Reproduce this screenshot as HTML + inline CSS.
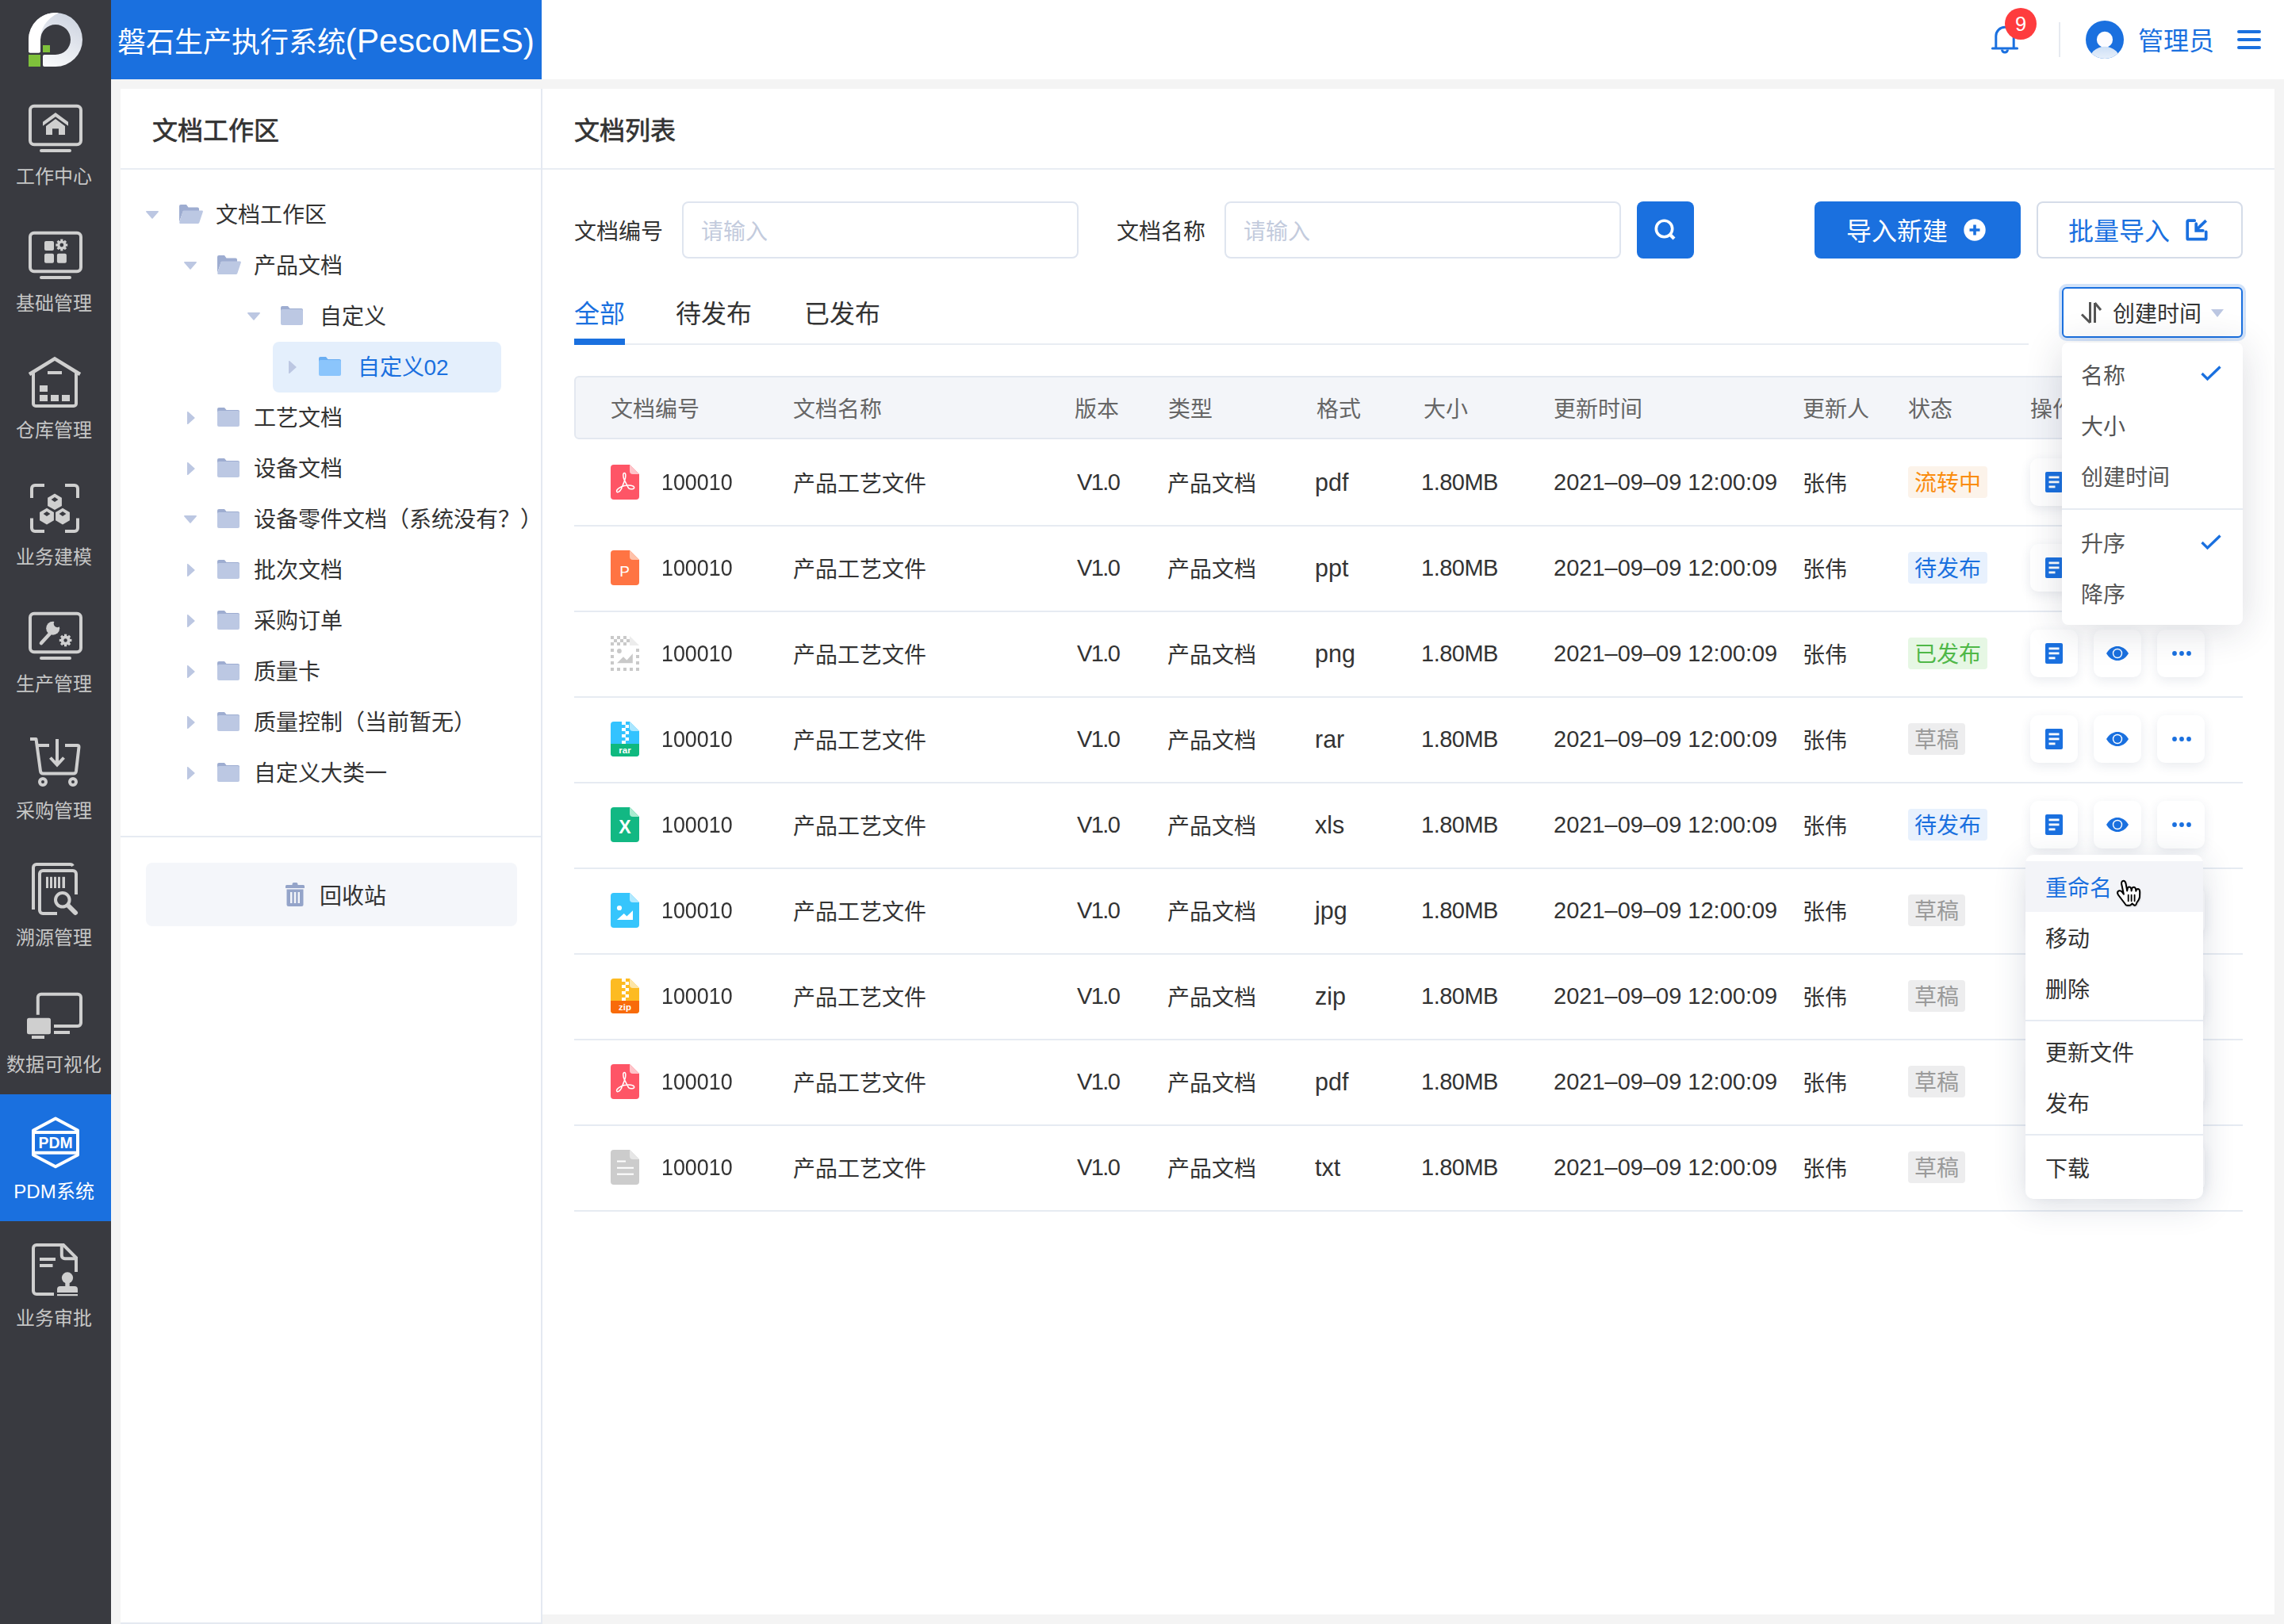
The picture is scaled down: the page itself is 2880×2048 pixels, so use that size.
<!DOCTYPE html>
<html lang="zh-CN"><head><meta charset="utf-8"><title>PescoMES</title>
<style>
*{margin:0;padding:0;box-sizing:border-box}
html,body{width:2880px;height:2048px;overflow:hidden}
body{position:relative;background:#f4f4f4;font-family:"Liberation Sans",sans-serif;color:#333}
.a{position:absolute}
.t{position:absolute;white-space:nowrap;line-height:40px;font-size:28px}
svg{position:absolute;overflow:visible}
</style></head><body>

<div class="a" style="left:0;top:0;width:140px;height:2048px;background:#393a40"></div>
<svg style="left:0;top:0" width="140" height="100" viewBox="0 0 140 100">
<defs><linearGradient id="lg" x1="0.85" y1="0.1" x2="0.35" y2="1"><stop offset="0" stop-color="#cfd5e1"/><stop offset="1" stop-color="#fafbfc"/></linearGradient></defs>
<path d="M36,64.5 a2,2 0 0 0 2,2 H49 a2,2 0 0 0 2,-2 V50 A19,19 0 1 1 70,69 H56 a2,2 0 0 0 -2,2 V82 a2,2 0 0 0 2,2 H70 A34,34 0 1 0 36,50 Z" fill="url(#lg)"/>
<path d="M36,64.5 a2,2 0 0 0 2,2 H49 a2,2 0 0 0 2,-2 V50 C51,36 58,24 74,16.2 A34,34 0 0 0 36,50 Z" fill="#ffffff"/>
<rect x="36" y="69" width="15" height="15" fill="#7fc13b"/>
<rect x="54" y="57" width="9" height="9" fill="#7fc13b"/>
</svg>
<svg style="left:0;top:100px" width="140" height="160" viewBox="0 0 140 160"><rect x="38" y="33.7" width="64" height="48.5" rx="5" fill="none" stroke="#cfcfcf" stroke-width="4"/><rect x="50" y="88" width="40" height="4" rx="2" fill="#cfcfcf"/><path d="M54,53.7 L70,41.9 L86,53.7 V58.8 L70,47.3 L54,58.8Z" fill="#cfcfcf"/><path d="M58,59 L70,50 L82,59 V70 H74 V62.3 H66 V70 H58Z" fill="#cfcfcf"/></svg>
<div class="t" style="left:-2px;width:140px;text-align:center;top:202.9px;font-size:24px;color:#c6c6c6">工作中心</div>
<svg style="left:0;top:260px" width="140" height="160" viewBox="0 0 140 160"><rect x="38" y="33.7" width="64" height="48.5" rx="5" fill="none" stroke="#cfcfcf" stroke-width="4"/><rect x="50" y="88" width="40" height="4" rx="2" fill="#cfcfcf"/><rect x="56" y="44" width="12" height="12" rx="2" fill="#cfcfcf"/><rect x="56" y="59.8" width="12" height="12" rx="2" fill="#cfcfcf"/><rect x="71.9" y="59.8" width="12" height="12" rx="2" fill="#cfcfcf"/><circle cx="77.8" cy="49" r="5.6000000000000005" fill="#cfcfcf"/><rect x="76.2" y="41.599999999999994" width="3.2" height="3" fill="#cfcfcf" transform="rotate(0 77.8 49)"/><rect x="76.2" y="41.599999999999994" width="3.2" height="3" fill="#cfcfcf" transform="rotate(45 77.8 49)"/><rect x="76.2" y="41.599999999999994" width="3.2" height="3" fill="#cfcfcf" transform="rotate(90 77.8 49)"/><rect x="76.2" y="41.599999999999994" width="3.2" height="3" fill="#cfcfcf" transform="rotate(135 77.8 49)"/><rect x="76.2" y="41.599999999999994" width="3.2" height="3" fill="#cfcfcf" transform="rotate(180 77.8 49)"/><rect x="76.2" y="41.599999999999994" width="3.2" height="3" fill="#cfcfcf" transform="rotate(225 77.8 49)"/><rect x="76.2" y="41.599999999999994" width="3.2" height="3" fill="#cfcfcf" transform="rotate(270 77.8 49)"/><rect x="76.2" y="41.599999999999994" width="3.2" height="3" fill="#cfcfcf" transform="rotate(315 77.8 49)"/><circle cx="77.8" cy="49" r="2.4" fill="#393a40"/></svg>
<div class="t" style="left:-2px;width:140px;text-align:center;top:362.9px;font-size:24px;color:#c6c6c6">基础管理</div>
<svg style="left:0;top:420px" width="140" height="160" viewBox="0 0 140 160"><path d="M37,52 L69,32.3 L101,52" fill="none" stroke="#cfcfcf" stroke-width="4.5"/><path d="M42,50 V89 a3,3 0 0 0 3,3 H93 a3,3 0 0 0 3,-3 V50" fill="none" stroke="#cfcfcf" stroke-width="4"/><rect x="60" y="48" width="18" height="4" fill="#cfcfcf"/><rect x="50" y="66" width="10" height="8" fill="#cfcfcf"/><rect x="50" y="78" width="10" height="8" fill="#cfcfcf"/><rect x="64" y="78" width="10" height="8" fill="#cfcfcf"/><rect x="78" y="78" width="10" height="8" fill="#cfcfcf"/></svg>
<div class="t" style="left:-2px;width:140px;text-align:center;top:522.9px;font-size:24px;color:#c6c6c6">仓库管理</div>
<svg style="left:0;top:580px" width="140" height="160" viewBox="0 0 140 160"><path d="M40,48 V36 a4,4 0 0 1 4,-4 H56" fill="none" stroke="#cfcfcf" stroke-width="4"/><path d="M82,32 H94 a4,4 0 0 1 4,4 V48" fill="none" stroke="#cfcfcf" stroke-width="4"/><path d="M40,73.5 V86 a4,4 0 0 0 4,4 H56" fill="none" stroke="#cfcfcf" stroke-width="4"/><path d="M98,73.5 V86 a4,4 0 0 1 -4,4 H82" fill="none" stroke="#cfcfcf" stroke-width="4"/><polygon points="69.00,42.50 77.92,47.65 77.92,57.95 69.00,63.10 60.08,57.95 60.08,47.65" fill="#cfcfcf"/><polygon points="59.00,60.80 67.92,65.95 67.92,76.25 59.00,81.40 50.08,76.25 50.08,65.95" fill="#cfcfcf"/><polygon points="79.00,60.80 87.92,65.95 87.92,76.25 79.00,81.40 70.08,76.25 70.08,65.95" fill="#cfcfcf"/><polygon points="69,47 73.4,50 69,53 64.6,50" fill="#393a40"/><polygon points="59,65 63.4,68 59,71 54.6,68" fill="#393a40"/><polygon points="79,65 83.4,68 79,71 74.6,68" fill="#393a40"/></svg>
<div class="t" style="left:-2px;width:140px;text-align:center;top:682.9px;font-size:24px;color:#c6c6c6">业务建模</div>
<svg style="left:0;top:740px" width="140" height="160" viewBox="0 0 140 160"><rect x="38" y="33.7" width="64" height="48.5" rx="5" fill="none" stroke="#cfcfcf" stroke-width="4"/><rect x="50" y="88" width="40" height="4" rx="2" fill="#cfcfcf"/><line x1="52" y1="71" x2="63" y2="59" stroke="#cfcfcf" stroke-width="4.6" stroke-linecap="round"/><circle cx="66.7" cy="52.2" r="8.5" fill="#cfcfcf"/><circle cx="72.3" cy="46.6" r="4.6" fill="#393a40"/><circle cx="82.6" cy="67.5" r="6.0" fill="#cfcfcf"/><rect x="81.0" y="59.699999999999996" width="3.2" height="3" fill="#cfcfcf" transform="rotate(0 82.6 67.5)"/><rect x="81.0" y="59.699999999999996" width="3.2" height="3" fill="#cfcfcf" transform="rotate(45 82.6 67.5)"/><rect x="81.0" y="59.699999999999996" width="3.2" height="3" fill="#cfcfcf" transform="rotate(90 82.6 67.5)"/><rect x="81.0" y="59.699999999999996" width="3.2" height="3" fill="#cfcfcf" transform="rotate(135 82.6 67.5)"/><rect x="81.0" y="59.699999999999996" width="3.2" height="3" fill="#cfcfcf" transform="rotate(180 82.6 67.5)"/><rect x="81.0" y="59.699999999999996" width="3.2" height="3" fill="#cfcfcf" transform="rotate(225 82.6 67.5)"/><rect x="81.0" y="59.699999999999996" width="3.2" height="3" fill="#cfcfcf" transform="rotate(270 82.6 67.5)"/><rect x="81.0" y="59.699999999999996" width="3.2" height="3" fill="#cfcfcf" transform="rotate(315 82.6 67.5)"/><circle cx="82.6" cy="67.5" r="2.2" fill="#393a40"/></svg>
<div class="t" style="left:-2px;width:140px;text-align:center;top:842.9px;font-size:24px;color:#c6c6c6">生产管理</div>
<svg style="left:0;top:900px" width="140" height="160" viewBox="0 0 140 160"><path d="M38,32 H45.5 L51,72.5 a3.5,3.5 0 0 0 3.5,3 H92.5 a3.5,3.5 0 0 0 3.5,-3 L99.5,42 a2,2 0 0 0 -2,-2 H82" fill="none" stroke="#cfcfcf" stroke-width="4" stroke-linejoin="round"/><path d="M46,40 H62" stroke="#cfcfcf" stroke-width="4"/><path d="M72,32 V64" stroke="#cfcfcf" stroke-width="4"/><path d="M63.5,55.5 L72,64.5 L80.5,55.5" fill="none" stroke="#cfcfcf" stroke-width="4"/><circle cx="54" cy="86" r="4" fill="none" stroke="#cfcfcf" stroke-width="4"/><circle cx="92" cy="86" r="4" fill="none" stroke="#cfcfcf" stroke-width="4"/></svg>
<div class="t" style="left:-2px;width:140px;text-align:center;top:1002.9px;font-size:24px;color:#c6c6c6">采购管理</div>
<svg style="left:0;top:1060px" width="140" height="160" viewBox="0 0 140 160"><path d="M42,87 V34 a4,4 0 0 1 4,-4 H88 a4,4 0 0 1 4,2" fill="none" stroke="#cfcfcf" stroke-width="4"/><path d="M72,92 H54 a4,4 0 0 1 -4,-4 V42 a4,4 0 0 1 4,-4 H92 a4,4 0 0 1 4,4 V68" fill="none" stroke="#cfcfcf" stroke-width="4"/><rect x="58" y="45.8" width="3" height="14.2" fill="#cfcfcf"/><rect x="63" y="45.8" width="3" height="14.2" fill="#cfcfcf"/><rect x="68" y="45.8" width="3" height="14.2" fill="#cfcfcf"/><rect x="73" y="45.8" width="3" height="14.2" fill="#cfcfcf"/><rect x="78.5" y="45.8" width="3.5" height="14.2" fill="#cfcfcf"/><circle cx="78.8" cy="74.8" r="8.8" fill="none" stroke="#cfcfcf" stroke-width="4"/><line x1="86" y1="82" x2="95" y2="91" stroke="#cfcfcf" stroke-width="6" stroke-linecap="round"/></svg>
<div class="t" style="left:-2px;width:140px;text-align:center;top:1162.9px;font-size:24px;color:#c6c6c6">溯源管理</div>
<svg style="left:0;top:1220px" width="140" height="160" viewBox="0 0 140 160"><path d="M47.8,59.8 V37.7 a4,4 0 0 1 4,-4 H98 a4,4 0 0 1 4,4 V70 a4,4 0 0 1 -4,4 H68" fill="none" stroke="#cfcfcf" stroke-width="4"/><rect x="68" y="80" width="20" height="4" fill="#cfcfcf"/><rect x="34" y="63.8" width="30" height="20.4" rx="2.5" fill="#cfcfcf"/><rect x="40" y="86" width="16" height="4" fill="#cfcfcf"/></svg>
<div class="t" style="left:-2px;width:140px;text-align:center;top:1322.9px;font-size:24px;color:#c6c6c6">数据可视化</div>
<div class="a" style="left:0;top:1380px;width:140px;height:160px;background:#1a70df"></div>
<svg style="left:0;top:1380px" width="140" height="160" viewBox="0 0 140 160"><path d="M70,30.6 L98,45.6 V76.5 L70,91.2 L42,76.5 V45.6 Z" fill="none" stroke="#fff" stroke-width="4" stroke-linejoin="round"/><path d="M42,48 H98 M42,73.7 H98" stroke="#fff" stroke-width="4"/><text x="70" y="68.2" font-size="19.4" font-weight="bold" text-anchor="middle" fill="#fff" font-family="Liberation Sans">PDM</text></svg>
<div class="t" style="left:-2px;width:140px;text-align:center;top:1482.9px;font-size:24px;color:#ffffff">PDM系统</div>
<svg style="left:0;top:1540px" width="140" height="160" viewBox="0 0 140 160"><path d="M68,92 H46 a4,4 0 0 1 -4,-4 V34 a4,4 0 0 1 4,-4 H80 L96,46 V64" fill="none" stroke="#cfcfcf" stroke-width="4"/><path d="M77.8,31 V43.3 a4,4 0 0 0 4,4 H95" fill="none" stroke="#cfcfcf" stroke-width="4"/><rect x="50" y="46" width="20" height="4" fill="#cfcfcf"/><rect x="50" y="54" width="16.5" height="4" fill="#cfcfcf"/><circle cx="85" cy="71.4" r="7.1" fill="#cfcfcf"/><rect x="82.3" y="74" width="5.4" height="9" fill="#cfcfcf"/><path d="M72,90 V86 a4,4 0 0 1 4,-4 H94 a4,4 0 0 1 4,4 V90 Z" fill="#cfcfcf"/><rect x="72" y="92" width="26" height="2.2" fill="#cfcfcf"/></svg>
<div class="t" style="left:-2px;width:140px;text-align:center;top:1642.9px;font-size:24px;color:#c6c6c6">业务审批</div>
<div class="a" style="left:140px;top:0;width:2740px;height:100px;background:#fff"></div>
<div class="a" style="left:140px;top:0;width:543px;height:100px;background:#1a70df"></div>
<div class="t" style="left:147.5px;top:22px;font-size:36px;line-height:60px;color:#fff">磐石生产执行系统<span style="font-size:42.5px">(PescoMES)</span></div>
<svg style="left:2500px;top:20px" width="60" height="60" viewBox="0 0 60 60">
<path d="M16.8,41 V25.5 a11.2,11.2 0 0 1 22.4,0 V41" fill="none" stroke="#1a70df" stroke-width="3"/>
<line x1="12.5" y1="41" x2="43.5" y2="41" stroke="#1a70df" stroke-width="3.2" stroke-linecap="round"/>
<path d="M24.5,42.6 a3.5,3.5 0 0 0 7,0" fill="none" stroke="#1a70df" stroke-width="3"/>
</svg>
<div class="a" style="left:2528px;top:10px;width:40px;height:40px;border-radius:20px;background:#fe3c3e;color:#fff;font-size:25.5px;line-height:40px;text-align:center">9</div>
<div class="a" style="left:2596px;top:28px;width:2px;height:44px;background:#e6eaf0"></div>
<svg style="left:2630px;top:26px" width="48" height="48" viewBox="0 0 48 48">
<defs><clipPath id="avc"><circle cx="24" cy="24" r="24"/></clipPath>
<linearGradient id="avg" x1="0" y1="0" x2="0" y2="1"><stop offset="0" stop-color="#cddff6"/><stop offset="0.6" stop-color="#f4f8fd"/><stop offset="1" stop-color="#ffffff"/></linearGradient></defs>
<circle cx="24" cy="24" r="24" fill="#1a70df"/>
<circle cx="24" cy="23.9" r="10.1" fill="#fdfcff"/>
<ellipse cx="24" cy="52" rx="20" ry="19.3" fill="url(#avg)" clip-path="url(#avc)"/>
</svg>
<div class="t" style="left:2695.5px;top:32.0px;font-size:32px;color:#1a70df;">管理员</div>
<div class="a" style="left:2821px;top:38px;width:30px;height:4px;border-radius:2px;background:#1a70df"></div>
<div class="a" style="left:2821px;top:48px;width:30px;height:4px;border-radius:2px;background:#1a70df"></div>
<div class="a" style="left:2821px;top:58px;width:30px;height:4px;border-radius:2px;background:#1a70df"></div>
<div class="a" style="left:152px;top:112px;width:532px;height:1936px;background:#fff;border-right:2px solid #e4e9f1;border-bottom:2px solid #e4e9f1"></div>
<div class="t" style="left:192.0px;top:144.5px;font-size:32px;color:#333333;-webkit-text-stroke:0.7px #333">文档工作区</div>
<div class="a" style="left:152px;top:212px;width:530px;height:2px;background:#e9edf3"></div>
<svg style="left:184px;top:265.5px" width="16" height="10" viewBox="0 0 16 10"><path d="M0.8,0 H15.2 a0.8,0.8 0 0 1 0.6,1.3 L8.6,9.4 a0.8,0.8 0 0 1 -1.2,0 L0.2,1.3 A0.8,0.8 0 0 1 0.8,0Z" fill="#bcc7e2"/></svg>
<svg style="left:226px;top:257.5px" width="30" height="24" viewBox="0 0 30 24"><path d="M0,2 a2,2 0 0 1 2,-2 H9 L11.5,3.5 H23 a2,2 0 0 1 2,2 V8 H5 L0,22Z" fill="#9eadd1"/><path d="M4.5,8.5 a1.5,1.5 0 0 1 1.4,-1 H28.5 a1.3,1.3 0 0 1 1.3,1.7 L25.3,22.8 a1.5,1.5 0 0 1 -1.4,1.1 H1.6 a1.3,1.3 0 0 1 -1.3,-1.7Z" fill="#bcc8e3"/></svg>
<div class="t" style="left:272.0px;top:252.2px;font-size:28px;color:#333333;">文档工作区</div>
<svg style="left:232px;top:329.5px" width="16" height="10" viewBox="0 0 16 10"><path d="M0.8,0 H15.2 a0.8,0.8 0 0 1 0.6,1.3 L8.6,9.4 a0.8,0.8 0 0 1 -1.2,0 L0.2,1.3 A0.8,0.8 0 0 1 0.8,0Z" fill="#bcc7e2"/></svg>
<svg style="left:274px;top:321.5px" width="30" height="24" viewBox="0 0 30 24"><path d="M0,2 a2,2 0 0 1 2,-2 H9 L11.5,3.5 H23 a2,2 0 0 1 2,2 V8 H5 L0,22Z" fill="#9eadd1"/><path d="M4.5,8.5 a1.5,1.5 0 0 1 1.4,-1 H28.5 a1.3,1.3 0 0 1 1.3,1.7 L25.3,22.8 a1.5,1.5 0 0 1 -1.4,1.1 H1.6 a1.3,1.3 0 0 1 -1.3,-1.7Z" fill="#bcc8e3"/></svg>
<div class="t" style="left:319.5px;top:316.2px;font-size:28px;color:#333333;">产品文档</div>
<svg style="left:312px;top:393.5px" width="16" height="10" viewBox="0 0 16 10"><path d="M0.8,0 H15.2 a0.8,0.8 0 0 1 0.6,1.3 L8.6,9.4 a0.8,0.8 0 0 1 -1.2,0 L0.2,1.3 A0.8,0.8 0 0 1 0.8,0Z" fill="#bcc7e2"/></svg>
<svg style="left:354px;top:385.5px" width="28" height="24" viewBox="0 0 28 24"><path d="M0,2 a2,2 0 0 1 2,-2 H9 L11.5,3 H26 a2,2 0 0 1 2,2 V6 H0Z" fill="#9eadd1"/><rect x="0" y="4" width="28" height="20" rx="2" fill="#bcc8e3"/></svg>
<div class="t" style="left:402.5px;top:380.2px;font-size:28px;color:#333333;">自定义</div>
<div class="a" style="left:344px;top:430.5px;width:288px;height:64px;border-radius:8px;background:#e4effc"></div>
<svg style="left:364px;top:454.5px" width="10" height="16" viewBox="0 0 10 16"><path d="M0,0.8 V15.2 a0.8,0.8 0 0 0 1.3,0.6 L9.4,8.6 a0.8,0.8 0 0 0 0,-1.2 L1.3,0.2 A0.8,0.8 0 0 0 0,0.8Z" fill="#bcc7e2"/></svg>
<svg style="left:402px;top:449.5px" width="28" height="24" viewBox="0 0 28 24"><path d="M0,2 a2,2 0 0 1 2,-2 H9 L11.5,3 H26 a2,2 0 0 1 2,2 V6 H0Z" fill="#6aaef2"/><rect x="0" y="4" width="28" height="20" rx="2" fill="#8bc5fc"/></svg>
<div class="t" style="left:450.5px;top:444.2px;font-size:28px;color:#1a70df;">自定义02</div>
<svg style="left:236px;top:518.5px" width="10" height="16" viewBox="0 0 10 16"><path d="M0,0.8 V15.2 a0.8,0.8 0 0 0 1.3,0.6 L9.4,8.6 a0.8,0.8 0 0 0 0,-1.2 L1.3,0.2 A0.8,0.8 0 0 0 0,0.8Z" fill="#bcc7e2"/></svg>
<svg style="left:274px;top:513.5px" width="28" height="24" viewBox="0 0 28 24"><path d="M0,2 a2,2 0 0 1 2,-2 H9 L11.5,3 H26 a2,2 0 0 1 2,2 V6 H0Z" fill="#9eadd1"/><rect x="0" y="4" width="28" height="20" rx="2" fill="#bcc8e3"/></svg>
<div class="t" style="left:319.5px;top:508.20000000000005px;font-size:28px;color:#333333;">工艺文档</div>
<svg style="left:236px;top:582.5px" width="10" height="16" viewBox="0 0 10 16"><path d="M0,0.8 V15.2 a0.8,0.8 0 0 0 1.3,0.6 L9.4,8.6 a0.8,0.8 0 0 0 0,-1.2 L1.3,0.2 A0.8,0.8 0 0 0 0,0.8Z" fill="#bcc7e2"/></svg>
<svg style="left:274px;top:577.5px" width="28" height="24" viewBox="0 0 28 24"><path d="M0,2 a2,2 0 0 1 2,-2 H9 L11.5,3 H26 a2,2 0 0 1 2,2 V6 H0Z" fill="#9eadd1"/><rect x="0" y="4" width="28" height="20" rx="2" fill="#bcc8e3"/></svg>
<div class="t" style="left:319.5px;top:572.2px;font-size:28px;color:#333333;">设备文档</div>
<svg style="left:232px;top:649.5px" width="16" height="10" viewBox="0 0 16 10"><path d="M0.8,0 H15.2 a0.8,0.8 0 0 1 0.6,1.3 L8.6,9.4 a0.8,0.8 0 0 1 -1.2,0 L0.2,1.3 A0.8,0.8 0 0 1 0.8,0Z" fill="#bcc7e2"/></svg>
<svg style="left:274px;top:641.5px" width="28" height="24" viewBox="0 0 28 24"><path d="M0,2 a2,2 0 0 1 2,-2 H9 L11.5,3 H26 a2,2 0 0 1 2,2 V6 H0Z" fill="#9eadd1"/><rect x="0" y="4" width="28" height="20" rx="2" fill="#bcc8e3"/></svg>
<div class="t" style="left:319.5px;top:636.2px;font-size:28px;color:#333333;">设备零件文档（系统没有？）</div>
<svg style="left:236px;top:710.5px" width="10" height="16" viewBox="0 0 10 16"><path d="M0,0.8 V15.2 a0.8,0.8 0 0 0 1.3,0.6 L9.4,8.6 a0.8,0.8 0 0 0 0,-1.2 L1.3,0.2 A0.8,0.8 0 0 0 0,0.8Z" fill="#bcc7e2"/></svg>
<svg style="left:274px;top:705.5px" width="28" height="24" viewBox="0 0 28 24"><path d="M0,2 a2,2 0 0 1 2,-2 H9 L11.5,3 H26 a2,2 0 0 1 2,2 V6 H0Z" fill="#9eadd1"/><rect x="0" y="4" width="28" height="20" rx="2" fill="#bcc8e3"/></svg>
<div class="t" style="left:319.5px;top:700.2px;font-size:28px;color:#333333;">批次文档</div>
<svg style="left:236px;top:774.5px" width="10" height="16" viewBox="0 0 10 16"><path d="M0,0.8 V15.2 a0.8,0.8 0 0 0 1.3,0.6 L9.4,8.6 a0.8,0.8 0 0 0 0,-1.2 L1.3,0.2 A0.8,0.8 0 0 0 0,0.8Z" fill="#bcc7e2"/></svg>
<svg style="left:274px;top:769.5px" width="28" height="24" viewBox="0 0 28 24"><path d="M0,2 a2,2 0 0 1 2,-2 H9 L11.5,3 H26 a2,2 0 0 1 2,2 V6 H0Z" fill="#9eadd1"/><rect x="0" y="4" width="28" height="20" rx="2" fill="#bcc8e3"/></svg>
<div class="t" style="left:319.5px;top:764.2px;font-size:28px;color:#333333;">采购订单</div>
<svg style="left:236px;top:838.5px" width="10" height="16" viewBox="0 0 10 16"><path d="M0,0.8 V15.2 a0.8,0.8 0 0 0 1.3,0.6 L9.4,8.6 a0.8,0.8 0 0 0 0,-1.2 L1.3,0.2 A0.8,0.8 0 0 0 0,0.8Z" fill="#bcc7e2"/></svg>
<svg style="left:274px;top:833.5px" width="28" height="24" viewBox="0 0 28 24"><path d="M0,2 a2,2 0 0 1 2,-2 H9 L11.5,3 H26 a2,2 0 0 1 2,2 V6 H0Z" fill="#9eadd1"/><rect x="0" y="4" width="28" height="20" rx="2" fill="#bcc8e3"/></svg>
<div class="t" style="left:319.5px;top:828.2px;font-size:28px;color:#333333;">质量卡</div>
<svg style="left:236px;top:902.5px" width="10" height="16" viewBox="0 0 10 16"><path d="M0,0.8 V15.2 a0.8,0.8 0 0 0 1.3,0.6 L9.4,8.6 a0.8,0.8 0 0 0 0,-1.2 L1.3,0.2 A0.8,0.8 0 0 0 0,0.8Z" fill="#bcc7e2"/></svg>
<svg style="left:274px;top:897.5px" width="28" height="24" viewBox="0 0 28 24"><path d="M0,2 a2,2 0 0 1 2,-2 H9 L11.5,3 H26 a2,2 0 0 1 2,2 V6 H0Z" fill="#9eadd1"/><rect x="0" y="4" width="28" height="20" rx="2" fill="#bcc8e3"/></svg>
<div class="t" style="left:319.5px;top:892.2px;font-size:28px;color:#333333;">质量控制（当前暂无）</div>
<svg style="left:236px;top:966.5px" width="10" height="16" viewBox="0 0 10 16"><path d="M0,0.8 V15.2 a0.8,0.8 0 0 0 1.3,0.6 L9.4,8.6 a0.8,0.8 0 0 0 0,-1.2 L1.3,0.2 A0.8,0.8 0 0 0 0,0.8Z" fill="#bcc7e2"/></svg>
<svg style="left:274px;top:961.5px" width="28" height="24" viewBox="0 0 28 24"><path d="M0,2 a2,2 0 0 1 2,-2 H9 L11.5,3 H26 a2,2 0 0 1 2,2 V6 H0Z" fill="#9eadd1"/><rect x="0" y="4" width="28" height="20" rx="2" fill="#bcc8e3"/></svg>
<div class="t" style="left:319.5px;top:956.2px;font-size:28px;color:#333333;">自定义大类一</div>
<div class="a" style="left:152px;top:1054px;width:530px;height:2px;background:#e6ebf2"></div>
<div class="a" style="left:184px;top:1088px;width:468px;height:80px;border-radius:8px;background:#f4f6fa"></div>
<svg style="left:360px;top:1113px" width="24" height="30" viewBox="0 0 24 30">
<path d="M8.5,2 a2,2 0 0 1 2,-2 H13.5 a2,2 0 0 1 2,2 V3 H22.5 a1.5,1.5 0 0 1 1.5,1.5 V7 H0 V4.5 A1.5,1.5 0 0 1 1.5,3 H8.5Z" fill="#94a4c9"/>
<path d="M1.5,8.5 H22.5 V27.5 a2.5,2.5 0 0 1 -2.5,2.5 H4 a2.5,2.5 0 0 1 -2.5,-2.5Z" fill="#94a4c9"/>
<rect x="6" y="12" width="2.4" height="14" fill="#f4f6fa"/><rect x="10.8" y="12" width="2.4" height="14" fill="#f4f6fa"/><rect x="15.6" y="12" width="2.4" height="14" fill="#f4f6fa"/>
</svg>
<div class="t" style="left:402.5px;top:1111.0px;font-size:28px;color:#333333;">回收站</div>
<div class="a" style="left:684px;top:112px;width:2184px;height:1924px;background:#fff"></div>
<div class="t" style="left:723.5px;top:145.0px;font-size:32px;color:#333333;-webkit-text-stroke:0.7px #333">文档列表</div>
<div class="a" style="left:684px;top:212px;width:2184px;height:2px;background:#e9edf3"></div>
<div class="t" style="left:723.5px;top:272.5px;font-size:28px;color:#333333;">文档编号</div>
<div class="a" style="left:860px;top:254px;width:500px;height:72px;border:2px solid #dfe5ef;border-radius:8px"></div>
<div class="t" style="left:883.5px;top:272.5px;font-size:28px;color:#c3cbdd;">请输入</div>
<div class="t" style="left:1408.0px;top:272.5px;font-size:28px;color:#333333;">文档名称</div>
<div class="a" style="left:1544px;top:254px;width:500px;height:72px;border:2px solid #dfe5ef;border-radius:8px"></div>
<div class="t" style="left:1567.5px;top:272.5px;font-size:28px;color:#c3cbdd;">请输入</div>
<div class="a" style="left:2064px;top:254px;width:72px;height:72px;border-radius:8px;background:#1a70df"></div>
<svg style="left:2080px;top:270px" width="40" height="40" viewBox="0 0 40 40"><circle cx="18.5" cy="18.5" r="10.2" fill="none" stroke="#fff" stroke-width="3.6"/><line x1="26" y1="26" x2="31" y2="31" stroke="#fff" stroke-width="4.2" stroke-linecap="butt"/></svg>
<div class="a" style="left:2288px;top:254px;width:260px;height:72px;border-radius:8px;background:#1a70df"></div>
<div class="t" style="left:2327.5px;top:272.0px;font-size:32px;color:#fff;">导入新建</div>
<svg style="left:2476px;top:276px" width="28" height="28" viewBox="0 0 28 28"><circle cx="14" cy="14" r="13.7" fill="#fff"/><path d="M14,7.5 V20.5 M7.5,14 H20.5" stroke="#1a70df" stroke-width="3.6"/></svg>
<div class="a" style="left:2568px;top:254px;width:260px;height:72px;border-radius:8px;border:2px solid #d5dce8;background:#fff"></div>
<div class="t" style="left:2608.0px;top:272.0px;font-size:32px;color:#1a70df;">批量导入</div>
<svg style="left:2756px;top:276px" width="28" height="28" viewBox="0 0 28 28"><path d="M11.2,2.2 H3.2 a1,1 0 0 0 -1,1 V24.7 a1,1 0 0 0 1,1 H24.7 a1,1 0 0 0 1,-1 V16.3" fill="none" stroke="#1a70df" stroke-width="3.7" stroke-linecap="round"/><path d="M25.7,2.1 L14.3,13.2" stroke="#1a70df" stroke-width="3.7"/><path d="M13.2,6.2 V14.9 H21.9" fill="none" stroke="#1a70df" stroke-width="3.7" stroke-linecap="round"/></svg>
<div class="t" style="left:723.5px;top:376.1px;font-size:32px;color:#1a70df;">全部</div>
<div class="t" style="left:851.5px;top:376.1px;font-size:32px;color:#333333;">待发布</div>
<div class="t" style="left:1013.5px;top:376.1px;font-size:32px;color:#333333;">已发布</div>
<div class="a" style="left:724px;top:432.5px;width:1834px;height:2px;background:#e9edf3"></div>
<div class="a" style="left:724px;top:427px;width:64px;height:7.5px;background:#1a70df"></div>
<div class="a" style="left:724px;top:473.5px;width:2104px;height:80.5px;border:2px solid #e3e8f0;border-radius:6px;background:#f3f5f9"></div>
<div class="t" style="left:769.5px;top:496.5px;font-size:28px;color:#666666;">文档编号</div>
<div class="t" style="left:999.5px;top:496.5px;font-size:28px;color:#666666;">文档名称</div>
<div class="t" style="left:1354.5px;top:496.5px;font-size:28px;color:#666666;">版本</div>
<div class="t" style="left:1473.0px;top:496.5px;font-size:28px;color:#666666;">类型</div>
<div class="t" style="left:1659.5px;top:496.5px;font-size:28px;color:#666666;">格式</div>
<div class="t" style="left:1794.5px;top:496.5px;font-size:28px;color:#666666;">大小</div>
<div class="t" style="left:1959.0px;top:496.5px;font-size:28px;color:#666666;">更新时间</div>
<div class="t" style="left:2273.0px;top:496.5px;font-size:28px;color:#666666;">更新人</div>
<div class="t" style="left:2405.5px;top:496.5px;font-size:28px;color:#666666;">状态</div>
<div class="t" style="left:2559.5px;top:496.5px;font-size:28px;color:#666666;">操作</div>
<svg style="left:770px;top:586px" width="36" height="44" viewBox="0 0 36 44"><path d="M4,0 H24 L36,12 V40 a4,4 0 0 1 -4,4 H4 a4,4 0 0 1 -4,-4 V4 a4,4 0 0 1 4,-4Z" fill="#fe5566"/><path d="M24,0 L36,12 H28 a4,4 0 0 1 -4,-4Z" fill="#ffc3c9"/><path d="M17.3,10.6 C15.2,10.6 15.4,15.5 17.4,19.6 L22.6,29.6 C24.8,31.4 30.2,31 29.7,28.6 C29.2,26.3 23.5,25.4 17.5,26.6 C12,27.8 7.2,31 7.6,33.6 C8,36 11.4,34.4 13.4,30.6 L17.4,20.6 C19.4,15.8 19.4,10.6 17.3,10.6Z" fill="none" stroke="#fff" stroke-width="1.5" stroke-linejoin="round"/></svg>
<div class="t" style="left:834px;top:587.75px;font-size:29.5px;color:#333333;transform:scaleX(0.91);transform-origin:0 0">100010</div>
<div class="t" style="left:999.5px;top:590.5px;font-size:28px;color:#333333;">产品工艺文件</div>
<div class="t" style="left:1358px;top:587.75px;font-size:29px;color:#333333;letter-spacing:-1.6px">V1.0</div>
<div class="t" style="left:1472.0px;top:590.5px;font-size:28px;color:#333333;">产品文档</div>
<div class="t" style="left:1658px;top:587.75px;font-size:30.5px;color:#333333;">pdf</div>
<div class="t" style="left:1792px;top:587.75px;font-size:29px;color:#333333;letter-spacing:-0.5px">1.80MB</div>
<div class="t" style="left:1959px;top:587.75px;font-size:29px;color:#333333;letter-spacing:0px">2021–09–09 12:00:09</div>
<div class="t" style="left:2273.0px;top:590.5px;font-size:28px;color:#333333;">张伟</div>
<div class="a" style="left:2406px;top:588px;width:100px;height:40px;border-radius:4px;background:#fcf3ea"></div>
<div class="t" style="left:2413.5px;top:589.5px;font-size:28px;color:#fa8c0f;">流转中</div>
<div class="a" style="left:2560px;top:578px;width:60px;height:60px;border-radius:10px;background:#fff;box-shadow:0 4px 14px rgba(40,60,100,0.10)"></div>
<div class="a" style="left:2640px;top:578px;width:60px;height:60px;border-radius:10px;background:#fff;box-shadow:0 4px 14px rgba(40,60,100,0.10)"></div>
<div class="a" style="left:2720px;top:578px;width:60px;height:60px;border-radius:10px;background:#fff;box-shadow:0 4px 14px rgba(40,60,100,0.10)"></div>
<svg style="left:2579px;top:595px" width="22" height="26" viewBox="0 0 22 26"><rect x="0" y="0" width="22" height="26" rx="2" fill="#1a70df"/><rect x="4.5" y="5.5" width="13" height="2.8" fill="#fff"/><rect x="4.5" y="11.5" width="13" height="2.8" fill="#fff"/><rect x="4.5" y="17.5" width="8" height="2.8" fill="#fff"/></svg>
<svg style="left:2656px;top:599px" width="28" height="18" viewBox="0 0 28 18"><path d="M0,9 C4,2.5 9,0 14,0 C19,0 24,2.5 28,9 C24,15.5 19,18 14,18 C9,18 4,15.5 0,9Z" fill="#1a70df"/><circle cx="14" cy="9" r="6.2" fill="#fff"/><circle cx="14" cy="9" r="4.8" fill="#1a70df"/></svg>
<svg style="left:2737.5px;top:604px" width="28" height="8" viewBox="0 0 28 8"><circle cx="4" cy="4" r="2.9" fill="#1a70df"/><circle cx="13" cy="4" r="2.9" fill="#1a70df"/><circle cx="22" cy="4" r="2.9" fill="#1a70df"/></svg>
<div class="a" style="left:724px;top:662px;width:2104px;height:2px;background:#e6ebf2"></div>
<svg style="left:770px;top:694px" width="36" height="44" viewBox="0 0 36 44"><path d="M4,0 H24 L36,12 V40 a4,4 0 0 1 -4,4 H4 a4,4 0 0 1 -4,-4 V4 a4,4 0 0 1 4,-4Z" fill="#ff7443"/><path d="M24,0 L36,12 H28 a4,4 0 0 1 -4,-4Z" fill="#ffc1a9"/><text x="17.5" y="33" font-size="19" text-anchor="middle" fill="#fff" font-family="Liberation Sans">P</text></svg>
<div class="t" style="left:834px;top:695.75px;font-size:29.5px;color:#333333;transform:scaleX(0.91);transform-origin:0 0">100010</div>
<div class="t" style="left:999.5px;top:698.5px;font-size:28px;color:#333333;">产品工艺文件</div>
<div class="t" style="left:1358px;top:695.75px;font-size:29px;color:#333333;letter-spacing:-1.6px">V1.0</div>
<div class="t" style="left:1472.0px;top:698.5px;font-size:28px;color:#333333;">产品文档</div>
<div class="t" style="left:1658px;top:695.75px;font-size:30.5px;color:#333333;">ppt</div>
<div class="t" style="left:1792px;top:695.75px;font-size:29px;color:#333333;letter-spacing:-0.5px">1.80MB</div>
<div class="t" style="left:1959px;top:695.75px;font-size:29px;color:#333333;letter-spacing:0px">2021–09–09 12:00:09</div>
<div class="t" style="left:2273.0px;top:698.5px;font-size:28px;color:#333333;">张伟</div>
<div class="a" style="left:2406px;top:696px;width:100px;height:40px;border-radius:4px;background:#e8f1fd"></div>
<div class="t" style="left:2413.5px;top:697.5px;font-size:28px;color:#1a70df;">待发布</div>
<div class="a" style="left:2560px;top:686px;width:60px;height:60px;border-radius:10px;background:#fff;box-shadow:0 4px 14px rgba(40,60,100,0.10)"></div>
<div class="a" style="left:2640px;top:686px;width:60px;height:60px;border-radius:10px;background:#fff;box-shadow:0 4px 14px rgba(40,60,100,0.10)"></div>
<div class="a" style="left:2720px;top:686px;width:60px;height:60px;border-radius:10px;background:#fff;box-shadow:0 4px 14px rgba(40,60,100,0.10)"></div>
<svg style="left:2579px;top:703px" width="22" height="26" viewBox="0 0 22 26"><rect x="0" y="0" width="22" height="26" rx="2" fill="#1a70df"/><rect x="4.5" y="5.5" width="13" height="2.8" fill="#fff"/><rect x="4.5" y="11.5" width="13" height="2.8" fill="#fff"/><rect x="4.5" y="17.5" width="8" height="2.8" fill="#fff"/></svg>
<svg style="left:2656px;top:707px" width="28" height="18" viewBox="0 0 28 18"><path d="M0,9 C4,2.5 9,0 14,0 C19,0 24,2.5 28,9 C24,15.5 19,18 14,18 C9,18 4,15.5 0,9Z" fill="#1a70df"/><circle cx="14" cy="9" r="6.2" fill="#fff"/><circle cx="14" cy="9" r="4.8" fill="#1a70df"/></svg>
<svg style="left:2737.5px;top:712px" width="28" height="8" viewBox="0 0 28 8"><circle cx="4" cy="4" r="2.9" fill="#1a70df"/><circle cx="13" cy="4" r="2.9" fill="#1a70df"/><circle cx="22" cy="4" r="2.9" fill="#1a70df"/></svg>
<div class="a" style="left:724px;top:770px;width:2104px;height:2px;background:#e6ebf2"></div>
<svg style="left:770px;top:802px" width="36" height="44" viewBox="0 0 36 44"><rect x="0" y="0" width="4" height="4" fill="#c9c9c9"/><rect x="8" y="0" width="4" height="4" fill="#c9c9c9"/><rect x="16" y="0" width="4" height="4" fill="#c9c9c9"/><rect x="4" y="4" width="4" height="4" fill="#c9c9c9"/><rect x="12" y="4" width="4" height="4" fill="#c9c9c9"/><rect x="20" y="4" width="4" height="4" fill="#c9c9c9"/><rect x="0" y="8" width="4" height="4" fill="#c9c9c9"/><rect x="8" y="8" width="4" height="4" fill="#c9c9c9"/><rect x="16" y="8" width="4" height="4" fill="#c9c9c9"/><rect x="0" y="16" width="4" height="4" fill="#c9c9c9"/><rect x="0" y="24" width="4" height="4" fill="#c9c9c9"/><rect x="0" y="32" width="4" height="4" fill="#c9c9c9"/><rect x="32" y="16" width="4" height="4" fill="#c9c9c9"/><rect x="32" y="24" width="4" height="4" fill="#c9c9c9"/><rect x="32" y="32" width="4" height="4" fill="#c9c9c9"/><rect x="8" y="40" width="4" height="4" fill="#c9c9c9"/><rect x="16" y="40" width="4" height="4" fill="#c9c9c9"/><rect x="24" y="40" width="4" height="4" fill="#c9c9c9"/><path d="M0,44 V40 H4 V44 A4,4 0 0 1 0,40Z" fill="#c9c9c9"/><rect x="0" y="40" width="4" height="4" fill="#c9c9c9"/><rect x="32" y="40" width="4" height="4" fill="#c9c9c9"/><path d="M24,0 L36,12 H24Z" fill="#ececec"/><circle cx="10.9" cy="19" r="2.9" fill="#c9c9c9"/><polygon points="8,34.3 16,26.2 20.4,30.5 27.8,22.2 27.8,34.3" fill="#c9c9c9"/></svg>
<div class="t" style="left:834px;top:803.75px;font-size:29.5px;color:#333333;transform:scaleX(0.91);transform-origin:0 0">100010</div>
<div class="t" style="left:999.5px;top:806.5px;font-size:28px;color:#333333;">产品工艺文件</div>
<div class="t" style="left:1358px;top:803.75px;font-size:29px;color:#333333;letter-spacing:-1.6px">V1.0</div>
<div class="t" style="left:1472.0px;top:806.5px;font-size:28px;color:#333333;">产品文档</div>
<div class="t" style="left:1658px;top:803.75px;font-size:30.5px;color:#333333;">png</div>
<div class="t" style="left:1792px;top:803.75px;font-size:29px;color:#333333;letter-spacing:-0.5px">1.80MB</div>
<div class="t" style="left:1959px;top:803.75px;font-size:29px;color:#333333;letter-spacing:0px">2021–09–09 12:00:09</div>
<div class="t" style="left:2273.0px;top:806.5px;font-size:28px;color:#333333;">张伟</div>
<div class="a" style="left:2406px;top:804px;width:100px;height:40px;border-radius:4px;background:#e6f7e4"></div>
<div class="t" style="left:2413.5px;top:805.5px;font-size:28px;color:#4fb848;">已发布</div>
<div class="a" style="left:2560px;top:794px;width:60px;height:60px;border-radius:10px;background:#fff;box-shadow:0 4px 14px rgba(40,60,100,0.10)"></div>
<div class="a" style="left:2640px;top:794px;width:60px;height:60px;border-radius:10px;background:#fff;box-shadow:0 4px 14px rgba(40,60,100,0.10)"></div>
<div class="a" style="left:2720px;top:794px;width:60px;height:60px;border-radius:10px;background:#fff;box-shadow:0 4px 14px rgba(40,60,100,0.10)"></div>
<svg style="left:2579px;top:811px" width="22" height="26" viewBox="0 0 22 26"><rect x="0" y="0" width="22" height="26" rx="2" fill="#1a70df"/><rect x="4.5" y="5.5" width="13" height="2.8" fill="#fff"/><rect x="4.5" y="11.5" width="13" height="2.8" fill="#fff"/><rect x="4.5" y="17.5" width="8" height="2.8" fill="#fff"/></svg>
<svg style="left:2656px;top:815px" width="28" height="18" viewBox="0 0 28 18"><path d="M0,9 C4,2.5 9,0 14,0 C19,0 24,2.5 28,9 C24,15.5 19,18 14,18 C9,18 4,15.5 0,9Z" fill="#1a70df"/><circle cx="14" cy="9" r="6.2" fill="#fff"/><circle cx="14" cy="9" r="4.8" fill="#1a70df"/></svg>
<svg style="left:2737.5px;top:820px" width="28" height="8" viewBox="0 0 28 8"><circle cx="4" cy="4" r="2.9" fill="#1a70df"/><circle cx="13" cy="4" r="2.9" fill="#1a70df"/><circle cx="22" cy="4" r="2.9" fill="#1a70df"/></svg>
<div class="a" style="left:724px;top:878px;width:2104px;height:2px;background:#e6ebf2"></div>
<svg style="left:770px;top:910px" width="36" height="44" viewBox="0 0 36 44"><path d="M4,0 H24 L36,12 V40 a4,4 0 0 1 -4,4 H4 a4,4 0 0 1 -4,-4 V4 a4,4 0 0 1 4,-4Z" fill="#33c3ff"/><path d="M24,0 L36,12 H28 a4,4 0 0 1 -4,-4Z" fill="#a8e6ff"/><path d="M0,28 H36 V40 a4,4 0 0 1 -4,4 H4 a4,4 0 0 1 -4,-4Z" fill="#0fb97f"/><rect x="14" y="0" width="5" height="28" fill="#fff"/><rect x="19" y="0" width="4" height="4" fill="#fff"/><rect x="19" y="8" width="4" height="4" fill="#fff"/><rect x="19" y="16" width="4" height="4" fill="#fff"/><rect x="19" y="24" width="4" height="4" fill="#fff"/><rect x="14" y="4" width="4.5" height="4" fill="#33c3ff"/><rect x="14" y="12" width="4.5" height="4" fill="#33c3ff"/><rect x="14" y="20" width="4.5" height="4" fill="#33c3ff"/><rect x="19" y="0" width="4" height="4" fill="#33c3ff"/><rect x="19" y="4" width="4" height="4" fill="#fff"/><rect x="19" y="12" width="4" height="4" fill="#fff"/><rect x="19" y="20" width="4" height="4" fill="#fff"/><rect x="19" y="8" width="4" height="4" fill="#33c3ff"/><rect x="19" y="16" width="4" height="4" fill="#33c3ff"/><rect x="19" y="24" width="4" height="4" fill="#33c3ff"/><text x="18" y="40" font-size="11.5" font-weight="bold" text-anchor="middle" fill="#fff" font-family="Liberation Sans">rar</text></svg>
<div class="t" style="left:834px;top:911.75px;font-size:29.5px;color:#333333;transform:scaleX(0.91);transform-origin:0 0">100010</div>
<div class="t" style="left:999.5px;top:914.5px;font-size:28px;color:#333333;">产品工艺文件</div>
<div class="t" style="left:1358px;top:911.75px;font-size:29px;color:#333333;letter-spacing:-1.6px">V1.0</div>
<div class="t" style="left:1472.0px;top:914.5px;font-size:28px;color:#333333;">产品文档</div>
<div class="t" style="left:1658px;top:911.75px;font-size:30.5px;color:#333333;">rar</div>
<div class="t" style="left:1792px;top:911.75px;font-size:29px;color:#333333;letter-spacing:-0.5px">1.80MB</div>
<div class="t" style="left:1959px;top:911.75px;font-size:29px;color:#333333;letter-spacing:0px">2021–09–09 12:00:09</div>
<div class="t" style="left:2273.0px;top:914.5px;font-size:28px;color:#333333;">张伟</div>
<div class="a" style="left:2406px;top:912px;width:72px;height:40px;border-radius:4px;background:#ededee"></div>
<div class="t" style="left:2413.5px;top:913.5px;font-size:28px;color:#9a9a9a;">草稿</div>
<div class="a" style="left:2560px;top:902px;width:60px;height:60px;border-radius:10px;background:#fff;box-shadow:0 4px 14px rgba(40,60,100,0.10)"></div>
<div class="a" style="left:2640px;top:902px;width:60px;height:60px;border-radius:10px;background:#fff;box-shadow:0 4px 14px rgba(40,60,100,0.10)"></div>
<div class="a" style="left:2720px;top:902px;width:60px;height:60px;border-radius:10px;background:#fff;box-shadow:0 4px 14px rgba(40,60,100,0.10)"></div>
<svg style="left:2579px;top:919px" width="22" height="26" viewBox="0 0 22 26"><rect x="0" y="0" width="22" height="26" rx="2" fill="#1a70df"/><rect x="4.5" y="5.5" width="13" height="2.8" fill="#fff"/><rect x="4.5" y="11.5" width="13" height="2.8" fill="#fff"/><rect x="4.5" y="17.5" width="8" height="2.8" fill="#fff"/></svg>
<svg style="left:2656px;top:923px" width="28" height="18" viewBox="0 0 28 18"><path d="M0,9 C4,2.5 9,0 14,0 C19,0 24,2.5 28,9 C24,15.5 19,18 14,18 C9,18 4,15.5 0,9Z" fill="#1a70df"/><circle cx="14" cy="9" r="6.2" fill="#fff"/><circle cx="14" cy="9" r="4.8" fill="#1a70df"/></svg>
<svg style="left:2737.5px;top:928px" width="28" height="8" viewBox="0 0 28 8"><circle cx="4" cy="4" r="2.9" fill="#1a70df"/><circle cx="13" cy="4" r="2.9" fill="#1a70df"/><circle cx="22" cy="4" r="2.9" fill="#1a70df"/></svg>
<div class="a" style="left:724px;top:986px;width:2104px;height:2px;background:#e6ebf2"></div>
<svg style="left:770px;top:1018px" width="36" height="44" viewBox="0 0 36 44"><path d="M4,0 H24 L36,12 V40 a4,4 0 0 1 -4,4 H4 a4,4 0 0 1 -4,-4 V4 a4,4 0 0 1 4,-4Z" fill="#12b883"/><path d="M24,0 L36,12 H28 a4,4 0 0 1 -4,-4Z" fill="#aaecd0"/><text x="18" y="33" font-size="23" font-weight="bold" text-anchor="middle" fill="#fff" font-family="Liberation Sans">X</text></svg>
<div class="t" style="left:834px;top:1019.75px;font-size:29.5px;color:#333333;transform:scaleX(0.91);transform-origin:0 0">100010</div>
<div class="t" style="left:999.5px;top:1022.5px;font-size:28px;color:#333333;">产品工艺文件</div>
<div class="t" style="left:1358px;top:1019.75px;font-size:29px;color:#333333;letter-spacing:-1.6px">V1.0</div>
<div class="t" style="left:1472.0px;top:1022.5px;font-size:28px;color:#333333;">产品文档</div>
<div class="t" style="left:1658px;top:1019.75px;font-size:30.5px;color:#333333;">xls</div>
<div class="t" style="left:1792px;top:1019.75px;font-size:29px;color:#333333;letter-spacing:-0.5px">1.80MB</div>
<div class="t" style="left:1959px;top:1019.75px;font-size:29px;color:#333333;letter-spacing:0px">2021–09–09 12:00:09</div>
<div class="t" style="left:2273.0px;top:1022.5px;font-size:28px;color:#333333;">张伟</div>
<div class="a" style="left:2406px;top:1020px;width:100px;height:40px;border-radius:4px;background:#e8f1fd"></div>
<div class="t" style="left:2413.5px;top:1021.5px;font-size:28px;color:#1a70df;">待发布</div>
<div class="a" style="left:2560px;top:1010px;width:60px;height:60px;border-radius:10px;background:#fff;box-shadow:0 4px 14px rgba(40,60,100,0.10)"></div>
<div class="a" style="left:2640px;top:1010px;width:60px;height:60px;border-radius:10px;background:#fff;box-shadow:0 4px 14px rgba(40,60,100,0.10)"></div>
<div class="a" style="left:2720px;top:1010px;width:60px;height:60px;border-radius:10px;background:#fff;box-shadow:0 4px 14px rgba(40,60,100,0.10)"></div>
<svg style="left:2579px;top:1027px" width="22" height="26" viewBox="0 0 22 26"><rect x="0" y="0" width="22" height="26" rx="2" fill="#1a70df"/><rect x="4.5" y="5.5" width="13" height="2.8" fill="#fff"/><rect x="4.5" y="11.5" width="13" height="2.8" fill="#fff"/><rect x="4.5" y="17.5" width="8" height="2.8" fill="#fff"/></svg>
<svg style="left:2656px;top:1031px" width="28" height="18" viewBox="0 0 28 18"><path d="M0,9 C4,2.5 9,0 14,0 C19,0 24,2.5 28,9 C24,15.5 19,18 14,18 C9,18 4,15.5 0,9Z" fill="#1a70df"/><circle cx="14" cy="9" r="6.2" fill="#fff"/><circle cx="14" cy="9" r="4.8" fill="#1a70df"/></svg>
<svg style="left:2737.5px;top:1036px" width="28" height="8" viewBox="0 0 28 8"><circle cx="4" cy="4" r="2.9" fill="#1a70df"/><circle cx="13" cy="4" r="2.9" fill="#1a70df"/><circle cx="22" cy="4" r="2.9" fill="#1a70df"/></svg>
<div class="a" style="left:724px;top:1094px;width:2104px;height:2px;background:#e6ebf2"></div>
<svg style="left:770px;top:1126px" width="36" height="44" viewBox="0 0 36 44"><path d="M4,0 H24 L36,12 V40 a4,4 0 0 1 -4,4 H4 a4,4 0 0 1 -4,-4 V4 a4,4 0 0 1 4,-4Z" fill="#36c5fc"/><path d="M24,0 L36,12 H28 a4,4 0 0 1 -4,-4Z" fill="#b0e9ff"/><circle cx="11" cy="19" r="3.1" fill="#fff"/><polygon points="7.9,33.9 16.8,25.9 20.4,29.5 28,22.2 28,33.9" fill="#fff"/></svg>
<div class="t" style="left:834px;top:1127.75px;font-size:29.5px;color:#333333;transform:scaleX(0.91);transform-origin:0 0">100010</div>
<div class="t" style="left:999.5px;top:1130.5px;font-size:28px;color:#333333;">产品工艺文件</div>
<div class="t" style="left:1358px;top:1127.75px;font-size:29px;color:#333333;letter-spacing:-1.6px">V1.0</div>
<div class="t" style="left:1472.0px;top:1130.5px;font-size:28px;color:#333333;">产品文档</div>
<div class="t" style="left:1658px;top:1127.75px;font-size:30.5px;color:#333333;">jpg</div>
<div class="t" style="left:1792px;top:1127.75px;font-size:29px;color:#333333;letter-spacing:-0.5px">1.80MB</div>
<div class="t" style="left:1959px;top:1127.75px;font-size:29px;color:#333333;letter-spacing:0px">2021–09–09 12:00:09</div>
<div class="t" style="left:2273.0px;top:1130.5px;font-size:28px;color:#333333;">张伟</div>
<div class="a" style="left:2406px;top:1128px;width:72px;height:40px;border-radius:4px;background:#ededee"></div>
<div class="t" style="left:2413.5px;top:1129.5px;font-size:28px;color:#9a9a9a;">草稿</div>
<div class="a" style="left:2560px;top:1118px;width:60px;height:60px;border-radius:10px;background:#fff;box-shadow:0 4px 14px rgba(40,60,100,0.10)"></div>
<div class="a" style="left:2640px;top:1118px;width:60px;height:60px;border-radius:10px;background:#fff;box-shadow:0 4px 14px rgba(40,60,100,0.10)"></div>
<div class="a" style="left:2720px;top:1118px;width:60px;height:60px;border-radius:10px;background:#fff;box-shadow:0 4px 14px rgba(40,60,100,0.10)"></div>
<svg style="left:2579px;top:1135px" width="22" height="26" viewBox="0 0 22 26"><rect x="0" y="0" width="22" height="26" rx="2" fill="#1a70df"/><rect x="4.5" y="5.5" width="13" height="2.8" fill="#fff"/><rect x="4.5" y="11.5" width="13" height="2.8" fill="#fff"/><rect x="4.5" y="17.5" width="8" height="2.8" fill="#fff"/></svg>
<svg style="left:2656px;top:1139px" width="28" height="18" viewBox="0 0 28 18"><path d="M0,9 C4,2.5 9,0 14,0 C19,0 24,2.5 28,9 C24,15.5 19,18 14,18 C9,18 4,15.5 0,9Z" fill="#1a70df"/><circle cx="14" cy="9" r="6.2" fill="#fff"/><circle cx="14" cy="9" r="4.8" fill="#1a70df"/></svg>
<svg style="left:2737.5px;top:1144px" width="28" height="8" viewBox="0 0 28 8"><circle cx="4" cy="4" r="2.9" fill="#1a70df"/><circle cx="13" cy="4" r="2.9" fill="#1a70df"/><circle cx="22" cy="4" r="2.9" fill="#1a70df"/></svg>
<div class="a" style="left:724px;top:1202px;width:2104px;height:2px;background:#e6ebf2"></div>
<svg style="left:770px;top:1234px" width="36" height="44" viewBox="0 0 36 44"><path d="M4,0 H24 L36,12 V40 a4,4 0 0 1 -4,4 H4 a4,4 0 0 1 -4,-4 V4 a4,4 0 0 1 4,-4Z" fill="#fdbb22"/><path d="M24,0 L36,12 H28 a4,4 0 0 1 -4,-4Z" fill="#fde5a6"/><path d="M0,28 H36 V40 a4,4 0 0 1 -4,4 H4 a4,4 0 0 1 -4,-4Z" fill="#f86b0a"/><rect x="14" y="0" width="5" height="28" fill="#fff"/><rect x="19" y="0" width="4" height="4" fill="#fff"/><rect x="19" y="8" width="4" height="4" fill="#fff"/><rect x="19" y="16" width="4" height="4" fill="#fff"/><rect x="19" y="24" width="4" height="4" fill="#fff"/><rect x="14" y="4" width="4.5" height="4" fill="#fdbb22"/><rect x="14" y="12" width="4.5" height="4" fill="#fdbb22"/><rect x="14" y="20" width="4.5" height="4" fill="#fdbb22"/><rect x="19" y="0" width="4" height="4" fill="#fdbb22"/><rect x="19" y="4" width="4" height="4" fill="#fff"/><rect x="19" y="12" width="4" height="4" fill="#fff"/><rect x="19" y="20" width="4" height="4" fill="#fff"/><rect x="19" y="8" width="4" height="4" fill="#fdbb22"/><rect x="19" y="16" width="4" height="4" fill="#fdbb22"/><rect x="19" y="24" width="4" height="4" fill="#fdbb22"/><text x="18" y="40" font-size="11.5" font-weight="bold" text-anchor="middle" fill="#fff" font-family="Liberation Sans">zip</text></svg>
<div class="t" style="left:834px;top:1235.75px;font-size:29.5px;color:#333333;transform:scaleX(0.91);transform-origin:0 0">100010</div>
<div class="t" style="left:999.5px;top:1238.5px;font-size:28px;color:#333333;">产品工艺文件</div>
<div class="t" style="left:1358px;top:1235.75px;font-size:29px;color:#333333;letter-spacing:-1.6px">V1.0</div>
<div class="t" style="left:1472.0px;top:1238.5px;font-size:28px;color:#333333;">产品文档</div>
<div class="t" style="left:1658px;top:1235.75px;font-size:30.5px;color:#333333;">zip</div>
<div class="t" style="left:1792px;top:1235.75px;font-size:29px;color:#333333;letter-spacing:-0.5px">1.80MB</div>
<div class="t" style="left:1959px;top:1235.75px;font-size:29px;color:#333333;letter-spacing:0px">2021–09–09 12:00:09</div>
<div class="t" style="left:2273.0px;top:1238.5px;font-size:28px;color:#333333;">张伟</div>
<div class="a" style="left:2406px;top:1236px;width:72px;height:40px;border-radius:4px;background:#ededee"></div>
<div class="t" style="left:2413.5px;top:1237.5px;font-size:28px;color:#9a9a9a;">草稿</div>
<div class="a" style="left:2560px;top:1226px;width:60px;height:60px;border-radius:10px;background:#fff;box-shadow:0 4px 14px rgba(40,60,100,0.10)"></div>
<div class="a" style="left:2640px;top:1226px;width:60px;height:60px;border-radius:10px;background:#fff;box-shadow:0 4px 14px rgba(40,60,100,0.10)"></div>
<div class="a" style="left:2720px;top:1226px;width:60px;height:60px;border-radius:10px;background:#fff;box-shadow:0 4px 14px rgba(40,60,100,0.10)"></div>
<svg style="left:2579px;top:1243px" width="22" height="26" viewBox="0 0 22 26"><rect x="0" y="0" width="22" height="26" rx="2" fill="#1a70df"/><rect x="4.5" y="5.5" width="13" height="2.8" fill="#fff"/><rect x="4.5" y="11.5" width="13" height="2.8" fill="#fff"/><rect x="4.5" y="17.5" width="8" height="2.8" fill="#fff"/></svg>
<svg style="left:2656px;top:1247px" width="28" height="18" viewBox="0 0 28 18"><path d="M0,9 C4,2.5 9,0 14,0 C19,0 24,2.5 28,9 C24,15.5 19,18 14,18 C9,18 4,15.5 0,9Z" fill="#1a70df"/><circle cx="14" cy="9" r="6.2" fill="#fff"/><circle cx="14" cy="9" r="4.8" fill="#1a70df"/></svg>
<svg style="left:2737.5px;top:1252px" width="28" height="8" viewBox="0 0 28 8"><circle cx="4" cy="4" r="2.9" fill="#1a70df"/><circle cx="13" cy="4" r="2.9" fill="#1a70df"/><circle cx="22" cy="4" r="2.9" fill="#1a70df"/></svg>
<div class="a" style="left:724px;top:1310px;width:2104px;height:2px;background:#e6ebf2"></div>
<svg style="left:770px;top:1342px" width="36" height="44" viewBox="0 0 36 44"><path d="M4,0 H24 L36,12 V40 a4,4 0 0 1 -4,4 H4 a4,4 0 0 1 -4,-4 V4 a4,4 0 0 1 4,-4Z" fill="#fe5566"/><path d="M24,0 L36,12 H28 a4,4 0 0 1 -4,-4Z" fill="#ffc3c9"/><path d="M17.3,10.6 C15.2,10.6 15.4,15.5 17.4,19.6 L22.6,29.6 C24.8,31.4 30.2,31 29.7,28.6 C29.2,26.3 23.5,25.4 17.5,26.6 C12,27.8 7.2,31 7.6,33.6 C8,36 11.4,34.4 13.4,30.6 L17.4,20.6 C19.4,15.8 19.4,10.6 17.3,10.6Z" fill="none" stroke="#fff" stroke-width="1.5" stroke-linejoin="round"/></svg>
<div class="t" style="left:834px;top:1343.75px;font-size:29.5px;color:#333333;transform:scaleX(0.91);transform-origin:0 0">100010</div>
<div class="t" style="left:999.5px;top:1346.5px;font-size:28px;color:#333333;">产品工艺文件</div>
<div class="t" style="left:1358px;top:1343.75px;font-size:29px;color:#333333;letter-spacing:-1.6px">V1.0</div>
<div class="t" style="left:1472.0px;top:1346.5px;font-size:28px;color:#333333;">产品文档</div>
<div class="t" style="left:1658px;top:1343.75px;font-size:30.5px;color:#333333;">pdf</div>
<div class="t" style="left:1792px;top:1343.75px;font-size:29px;color:#333333;letter-spacing:-0.5px">1.80MB</div>
<div class="t" style="left:1959px;top:1343.75px;font-size:29px;color:#333333;letter-spacing:0px">2021–09–09 12:00:09</div>
<div class="t" style="left:2273.0px;top:1346.5px;font-size:28px;color:#333333;">张伟</div>
<div class="a" style="left:2406px;top:1344px;width:72px;height:40px;border-radius:4px;background:#ededee"></div>
<div class="t" style="left:2413.5px;top:1345.5px;font-size:28px;color:#9a9a9a;">草稿</div>
<div class="a" style="left:2560px;top:1334px;width:60px;height:60px;border-radius:10px;background:#fff;box-shadow:0 4px 14px rgba(40,60,100,0.10)"></div>
<div class="a" style="left:2640px;top:1334px;width:60px;height:60px;border-radius:10px;background:#fff;box-shadow:0 4px 14px rgba(40,60,100,0.10)"></div>
<div class="a" style="left:2720px;top:1334px;width:60px;height:60px;border-radius:10px;background:#fff;box-shadow:0 4px 14px rgba(40,60,100,0.10)"></div>
<svg style="left:2579px;top:1351px" width="22" height="26" viewBox="0 0 22 26"><rect x="0" y="0" width="22" height="26" rx="2" fill="#1a70df"/><rect x="4.5" y="5.5" width="13" height="2.8" fill="#fff"/><rect x="4.5" y="11.5" width="13" height="2.8" fill="#fff"/><rect x="4.5" y="17.5" width="8" height="2.8" fill="#fff"/></svg>
<svg style="left:2656px;top:1355px" width="28" height="18" viewBox="0 0 28 18"><path d="M0,9 C4,2.5 9,0 14,0 C19,0 24,2.5 28,9 C24,15.5 19,18 14,18 C9,18 4,15.5 0,9Z" fill="#1a70df"/><circle cx="14" cy="9" r="6.2" fill="#fff"/><circle cx="14" cy="9" r="4.8" fill="#1a70df"/></svg>
<svg style="left:2737.5px;top:1360px" width="28" height="8" viewBox="0 0 28 8"><circle cx="4" cy="4" r="2.9" fill="#1a70df"/><circle cx="13" cy="4" r="2.9" fill="#1a70df"/><circle cx="22" cy="4" r="2.9" fill="#1a70df"/></svg>
<div class="a" style="left:724px;top:1418px;width:2104px;height:2px;background:#e6ebf2"></div>
<svg style="left:770px;top:1450px" width="36" height="44" viewBox="0 0 36 44"><path d="M4,0 H24 L36,12 V40 a4,4 0 0 1 -4,4 H4 a4,4 0 0 1 -4,-4 V4 a4,4 0 0 1 4,-4Z" fill="#cccccc"/><path d="M24,0 L36,12 H28 a4,4 0 0 1 -4,-4Z" fill="#e6e6e6"/><rect x="8" y="13.5" width="11" height="2" fill="#fff"/><rect x="8" y="21.8" width="21" height="2" fill="#fff"/><rect x="8" y="29.7" width="21" height="2" fill="#fff"/></svg>
<div class="t" style="left:834px;top:1451.75px;font-size:29.5px;color:#333333;transform:scaleX(0.91);transform-origin:0 0">100010</div>
<div class="t" style="left:999.5px;top:1454.5px;font-size:28px;color:#333333;">产品工艺文件</div>
<div class="t" style="left:1358px;top:1451.75px;font-size:29px;color:#333333;letter-spacing:-1.6px">V1.0</div>
<div class="t" style="left:1472.0px;top:1454.5px;font-size:28px;color:#333333;">产品文档</div>
<div class="t" style="left:1658px;top:1451.75px;font-size:30.5px;color:#333333;">txt</div>
<div class="t" style="left:1792px;top:1451.75px;font-size:29px;color:#333333;letter-spacing:-0.5px">1.80MB</div>
<div class="t" style="left:1959px;top:1451.75px;font-size:29px;color:#333333;letter-spacing:0px">2021–09–09 12:00:09</div>
<div class="t" style="left:2273.0px;top:1454.5px;font-size:28px;color:#333333;">张伟</div>
<div class="a" style="left:2406px;top:1452px;width:72px;height:40px;border-radius:4px;background:#ededee"></div>
<div class="t" style="left:2413.5px;top:1453.5px;font-size:28px;color:#9a9a9a;">草稿</div>
<div class="a" style="left:2560px;top:1442px;width:60px;height:60px;border-radius:10px;background:#fff;box-shadow:0 4px 14px rgba(40,60,100,0.10)"></div>
<div class="a" style="left:2640px;top:1442px;width:60px;height:60px;border-radius:10px;background:#fff;box-shadow:0 4px 14px rgba(40,60,100,0.10)"></div>
<div class="a" style="left:2720px;top:1442px;width:60px;height:60px;border-radius:10px;background:#fff;box-shadow:0 4px 14px rgba(40,60,100,0.10)"></div>
<svg style="left:2579px;top:1459px" width="22" height="26" viewBox="0 0 22 26"><rect x="0" y="0" width="22" height="26" rx="2" fill="#1a70df"/><rect x="4.5" y="5.5" width="13" height="2.8" fill="#fff"/><rect x="4.5" y="11.5" width="13" height="2.8" fill="#fff"/><rect x="4.5" y="17.5" width="8" height="2.8" fill="#fff"/></svg>
<svg style="left:2656px;top:1463px" width="28" height="18" viewBox="0 0 28 18"><path d="M0,9 C4,2.5 9,0 14,0 C19,0 24,2.5 28,9 C24,15.5 19,18 14,18 C9,18 4,15.5 0,9Z" fill="#1a70df"/><circle cx="14" cy="9" r="6.2" fill="#fff"/><circle cx="14" cy="9" r="4.8" fill="#1a70df"/></svg>
<svg style="left:2737.5px;top:1468px" width="28" height="8" viewBox="0 0 28 8"><circle cx="4" cy="4" r="2.9" fill="#1a70df"/><circle cx="13" cy="4" r="2.9" fill="#1a70df"/><circle cx="22" cy="4" r="2.9" fill="#1a70df"/></svg>
<div class="a" style="left:724px;top:1526px;width:2104px;height:2px;background:#e6ebf2"></div>
<div class="a" style="left:2596px;top:358px;width:236px;height:72px;border-radius:10px;background:#d3e3f9"></div>
<div class="a" style="left:2600px;top:362px;width:228px;height:64px;border-radius:6px;border:2px solid #1a70df;background:#fff"></div>
<svg style="left:2624px;top:381px" width="26" height="27" viewBox="0 0 26 27"><path d="M11.5,0 V26" stroke="#555" stroke-width="3"/><path d="M1,15.5 L11.5,26" stroke="#555" stroke-width="3"/><path d="M17.5,26 V1" stroke="#555" stroke-width="3"/><path d="M17.5,1 L25,10" stroke="#555" stroke-width="3"/></svg>
<div class="t" style="left:2663.5px;top:376.5px;font-size:28px;color:#333333;">创建时间</div>
<svg style="left:2788px;top:390px" width="16" height="10" viewBox="0 0 16 10"><path d="M0,0 H16 L8,10Z" fill="#bcc7e2"/></svg>
<div class="a" style="left:2600px;top:432px;width:228px;height:356px;border-radius:8px;background:#fff;box-shadow:0 6px 48px rgba(30,40,60,0.16)"></div>
<div class="t" style="left:2624.0px;top:454.5px;font-size:28px;color:#555555;">名称</div>
<div class="t" style="left:2624.0px;top:518.5px;font-size:28px;color:#555555;">大小</div>
<div class="t" style="left:2624.0px;top:582.5px;font-size:28px;color:#555555;">创建时间</div>
<div class="a" style="left:2600px;top:641px;width:228px;height:2px;background:#e6ebf2"></div>
<div class="t" style="left:2624.0px;top:666.5px;font-size:28px;color:#555555;">升序</div>
<div class="t" style="left:2624.0px;top:730.5px;font-size:28px;color:#555555;">降序</div>
<svg style="left:2774px;top:460px" width="28" height="22" viewBox="0 0 28 22"><path d="M2.5,11 L9.5,18 L25.5,2.5" fill="none" stroke="#1a70df" stroke-width="3.3"/></svg>
<svg style="left:2774px;top:673px" width="28" height="22" viewBox="0 0 28 22"><path d="M2.5,11 L9.5,18 L25.5,2.5" fill="none" stroke="#1a70df" stroke-width="3.3"/></svg>
<div class="a" style="left:2554px;top:1078px;width:224px;height:434px;border-radius:10px;background:#fff;box-shadow:0 8px 40px rgba(30,50,90,0.16)"></div>
<div class="a" style="left:2554px;top:1086px;width:224px;height:64px;background:#f3f4f8"></div>
<div class="t" style="left:2578.5px;top:1100.5px;font-size:28px;color:#1a70df;">重命名</div>
<div class="t" style="left:2578.5px;top:1165.0px;font-size:28px;color:#333333;">移动</div>
<div class="t" style="left:2578.5px;top:1228.5px;font-size:28px;color:#333333;">删除</div>
<div class="a" style="left:2554px;top:1286px;width:224px;height:2px;background:#e6ebf2"></div>
<div class="t" style="left:2578.5px;top:1309.0px;font-size:28px;color:#333333;">更新文件</div>
<div class="t" style="left:2578.5px;top:1372.5px;font-size:28px;color:#333333;">发布</div>
<div class="a" style="left:2554px;top:1430px;width:224px;height:2px;background:#e6ebf2"></div>
<div class="t" style="left:2578.5px;top:1454.5px;font-size:28px;color:#333333;">下载</div>
<svg style="left:2660px;top:1100px" width="50" height="50" viewBox="0 0 50 50">
<defs><filter id="hs" x="-20%" y="-20%" width="140%" height="140%"><feGaussianBlur stdDeviation="0.8"/></filter></defs>
<path d="M17.9,27.7 L15.2,15 C14.8,12.5 15.8,10.8 17.5,10.8 C19.2,10.8 20.2,12.3 20.6,14.5 L22.2,23.4 L22.8,20.3 C23.3,18.8 24,18.5 24.8,18.5 C26,18.5 27,19.5 27.4,21 L27.6,23.4 L28.3,20.5 C28.8,19.2 29.5,18.8 30.5,18.8 C31.8,18.8 32.8,20 33.1,21.5 L33.3,23.7 L34,21.8 C34.6,21 35.3,20.9 36,20.9 C37.3,21 38.2,22.5 38.2,25 L38,31 C37.8,33.5 36.5,35.5 34.5,38 L33.5,40.5 C33,41.8 32,42 31,41.5 L28.6,39.4 L27,41 C26.2,41.8 25,41.9 24,41.8 H22 C20.8,41.8 20,41 19.4,39.5 L11,28.5 C10,27 9.8,25 10.8,24 C12,22.8 14,23 15.5,24.5 Z" fill="#000" opacity="0.35" transform="translate(0.6,1.2)" filter="url(#hs)"/>
<path d="M17.9,27.7 L15.2,15 C14.8,12.5 15.8,10.8 17.5,10.8 C19.2,10.8 20.2,12.3 20.6,14.5 L22.2,23.4 L22.8,20.3 C23.3,18.8 24,18.5 24.8,18.5 C26,18.5 27,19.5 27.4,21 L27.6,23.4 L28.3,20.5 C28.8,19.2 29.5,18.8 30.5,18.8 C31.8,18.8 32.8,20 33.1,21.5 L33.3,23.7 L34,21.8 C34.6,21 35.3,20.9 36,20.9 C37.3,21 38.2,22.5 38.2,25 L38,31 C37.8,33.5 36.5,35.5 34.5,38 L33.5,40.5 C33,41.8 32,42 31,41.5 L28.6,39.4 L27,41 C26.2,41.8 25,41.9 24,41.8 H22 C20.8,41.8 20,41 19.4,39.5 L11,28.5 C10,27 9.8,25 10.8,24 C12,22.8 14,23 15.5,24.5 Z" fill="#fff" stroke="#000" stroke-width="2" stroke-linejoin="round"/>
<path d="M23.7,28.6 V36.3 M27.6,28.6 V36.3 M31.6,28.6 V36.3" stroke="#000" stroke-width="1.8" stroke-linecap="round"/>
</svg>
</body></html>
